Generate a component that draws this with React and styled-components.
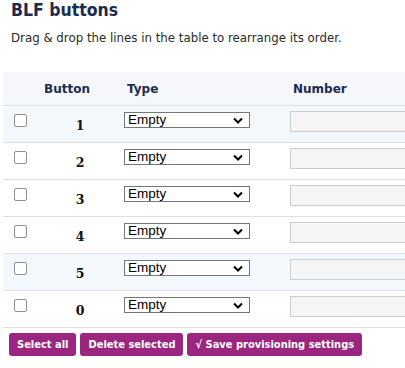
import React from 'react';
import styled, { createGlobalStyle } from 'styled-components';

const GlobalStyle = createGlobalStyle`
  html, body {
    margin: 0;
    padding: 0;
    background: #ffffff;
    overflow: hidden;
  }
  body {
    font-family: "DejaVu Sans", Verdana, sans-serif;
    color: #333333;
  }
`;

const Page = styled.div`
  width: 405px;
  overflow: hidden;
`;

const Title = styled.h2`
  margin: 0;
  padding: 0 0 0 11px;
  font-family: "DejaVu Sans Condensed", "DejaVu Sans", sans-serif;
  font-size: 17.5px;
  line-height: 20px;
  font-weight: bold;
  color: #1c2b4f;
`;

const Intro = styled.p`
  margin: 10px 0 0;
  padding-left: 11px;
  font-size: 11.8px;
  line-height: 16px;
  color: #2a2a2a;
`;

const Table = styled.div`
  margin: 26px 0 0 3px;
  width: 500px;
`;

const cols = '37px 80px 166px 1fr';

const HeadRow = styled.div`
  display: grid;
  grid-template-columns: ${cols};
  height: 33px;
  align-items: center;
  background: #f5f7fa;
  border-bottom: 1px solid #dde1e7;
`;

const HeadCell = styled.div`
  font-size: 12px;
  font-weight: bold;
  color: #1c2b4f;
  padding-left: ${p => p.$pad || 0}px;
`;

const Row = styled.div`
  display: grid;
  grid-template-columns: ${cols};
  height: 36px;
  align-items: start;
  background: ${p => (p.$tint ? '#f3f8fd' : '#ffffff')};
  border-bottom: 1px solid #dde1e7;
`;

const Check = styled.input.attrs({ type: 'checkbox' })`
  margin: 8px 0 0 11px;
  width: 13px;
  height: 13px;
  appearance: none;
  border: 1px solid #8f8f8f;
  border-radius: 2px;
  background: #fff;
`;

const Num = styled.div`
  padding-top: 12px;
  text-align: center;
  font-family: "DejaVu Serif", "Liberation Serif", serif;
  font-weight: bold;
  font-size: 12.5px;
  line-height: 16px;
  color: #111;
`;

const SelectBox = styled.div`
  position: relative;
  margin: 6px 0 0 4px;
  width: 126px;
  height: 16px;
  box-sizing: border-box;
  border: 1px solid #767676;
  background: #fff;
`;

const Select = styled.select`
  appearance: none;
  display: block;
  box-sizing: border-box;
  width: 100%;
  height: 15px;
  border: none;
  outline: none;
  background: transparent;
  padding: 0 0 0 3px;
  margin: -1px 0 0;
  font-family: "Liberation Sans", Arial, sans-serif;
  font-size: 13.5px;
  line-height: 15px;
  color: #000;
`;

const Chevron = styled.svg`
  position: absolute;
  right: 6px;
  top: 4px;
  pointer-events: none;
`;

const NumberInput = styled.input`
  margin: 5px 0 0 4px;
  width: 200px;
  height: 21px;
  box-sizing: border-box;
  border: 1px solid #cccccc;
  background: #f5f5f5;
`;

const Actions = styled.div`
  display: flex;
  gap: 4px;
  margin: 5px 0 0 9px;
`;

const Button = styled.button`
  height: 23px;
  padding: 0 8px;
  border: none;
  border-radius: 3px;
  background: #9a2680;
  color: #ffffff;
  font-family: "DejaVu Sans Condensed", "DejaVu Sans", sans-serif;
  font-size: 11px;
  font-weight: bold;
  white-space: nowrap;
`;

const lines = [
  { n: 1, tint: true },
  { n: 2 },
  { n: 3 },
  { n: 4 },
  { n: 5, tint: true },
  { n: 0 },
];

export default function App() {
  return (
    <Page>
      <GlobalStyle />
      <Title>BLF buttons</Title>
      <Intro>Drag &amp; drop the lines in the table to rearrange its order.</Intro>
      <Table>
        <HeadRow>
          <div />
          <HeadCell $pad={4}>Button</HeadCell>
          <HeadCell $pad={7}>Type</HeadCell>
          <HeadCell $pad={7}>Number</HeadCell>
        </HeadRow>
        {lines.map(l => (
          <Row key={l.n} $tint={l.tint}>
            <Check />
            <Num>{l.n}</Num>
            <SelectBox>
              <Select defaultValue="empty">
                <option value="empty">Empty</option>
              </Select>
              <Chevron width="10" height="7" viewBox="0 0 10 7">
                <path d="M1 1.5 L5 5.5 L9 1.5" fill="none" stroke="#000" strokeWidth="2" />
              </Chevron>
            </SelectBox>
            <NumberInput type="text" />
          </Row>
        ))}
      </Table>
      <Actions>
        <Button>Select all</Button>
        <Button>Delete selected</Button>
        <Button>√ Save provisioning settings</Button>
      </Actions>
    </Page>
  );
}
